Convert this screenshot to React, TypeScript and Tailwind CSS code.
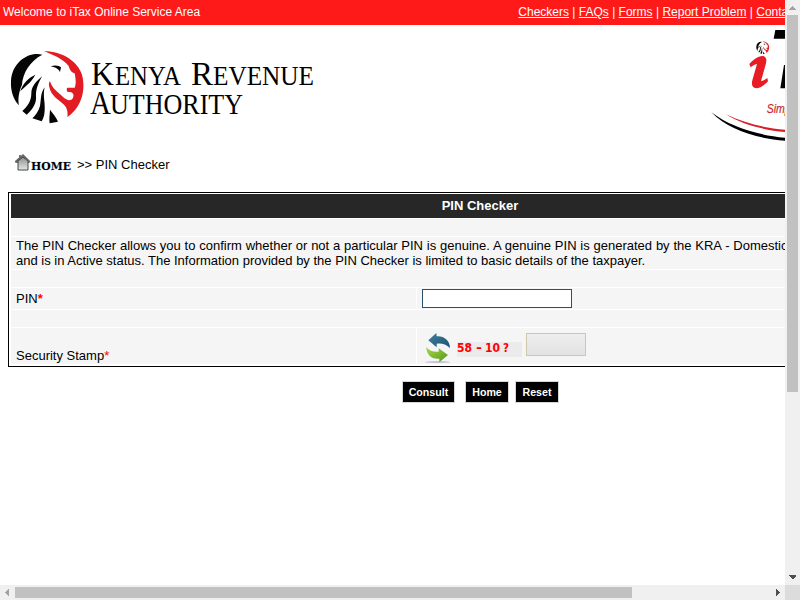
import React from "react";

function LionMark() {
  return (
    <g>
      <path fill="#050505" d="M127 44 C86 34 36 66 33 124 C31 154 42 182 57 196 C53 178 56 156 66 134 C68 100 90 62 127 44Z" />
      <path fill="#050505" d="M106 104 C88 112 68 130 61 154 C76 138 92 130 106 104Z" />
      <path fill="#050505" d="M126 109 C112 122 94 138 94 160 C94 184 82 200 67 213 L80 224 C100 206 110 188 108 168 C107 146 117 126 126 109Z" />
      <path fill="#050505" d="M134 142 C121 160 124 176 120 198 C116 214 106 226 97 235 L125 244 C136 228 135 202 133 184 C131 166 131 154 134 142Z" />
      <path fill="#050505" d="M150 209 C149 224 147 238 149 250 L174 245 C168 230 158 220 150 209Z" />
      <path fill="#050505" d="M152 79 C164 74 178 76 183 82 L180 96 C176 88 168 82 152 79Z" />
      <path fill="#e31b23" d="M132 34 C184 33 232 62 246 104 C260 158 238 208 202 231 C204 218 202 204 192 194 C178 180 154 170 148 142 C146 134 146 128 150 124 C156 146 174 156 190 172 C202 182 212 184 219 174 C222 166 221 160 214 157 L202 155 C199 149 200 146 202 143 L224 143 C230 130 226 112 224 100 C216 98 210 92 206 78 C188 56 158 44 132 34Z" />
    </g>
  );
}

function KraLogo() {
  return (
    <svg className="block h-[95px] w-[325px] shrink-0" viewBox="0 0 325 95">
      <g transform="scale(.33333)"><LionMark /></g>
      <g className="[font-family:'Liberation_Serif',serif] fill-black">
        <text x="91" y="45" fontSize="33.5" textLength="23" lengthAdjust="spacingAndGlyphs">K</text>
        <text x="115" y="45" fontSize="28" textLength="66" lengthAdjust="spacingAndGlyphs">ENYA</text>
        <text x="191" y="45" fontSize="33.5" textLength="22" lengthAdjust="spacingAndGlyphs">R</text>
        <text x="213" y="45" fontSize="28" textLength="101" lengthAdjust="spacingAndGlyphs">EVENUE</text>
        <text x="90" y="74" fontSize="33" textLength="21" lengthAdjust="spacingAndGlyphs">A</text>
        <text x="110" y="74" fontSize="29" textLength="133" lengthAdjust="spacingAndGlyphs">UTHORITY</text>
      </g>
    </svg>
  );
}

function ITaxLogo() {
  return (
    <svg className="block h-[120px] w-[85px] shrink-0" viewBox="0 0 255 360">
      <path d="M226 15H255V41H221Z M252 120H255V190H241Z" />
      <g transform="translate(163 43) scale(.178)"><LionMark /></g>
      <path fill="#e81c24" d="M148 117 C160 104 176 91 190 93 C202 97 200 108 196 122 L183 168 C190 168 195 164 202 159 L204 169 C194 180 182 189 169 190 C156 188 154 179 157 166 L171 117 C163 118 158 122 152 127Z" />
      <text x="200" y="263" fontSize="38" fontStyle="italic" fill="#c9252c" stroke="#c9252c" strokeWidth=".6" className="[font-family:'Liberation_Sans_Narrow','Liberation_Sans',sans-serif]" textLength="110" lengthAdjust="spacingAndGlyphs">Simplify</text>
      <path d="M34 262 C90 305 170 330 255 338 V347 C165 340 85 314 34 262Z" />
      <path fill="#d71f27" d="M78 268 C130 293 190 309 255 314 V321 C190 315 125 298 78 268Z" />
    </svg>
  );
}

function HomeIcon() {
  return (
    <svg className="mt-[9px] block h-[18px] w-[58px] shrink-0" viewBox="0 0 58 18">
      <defs>
        <linearGradient id="wall" x1="0" y1="0" x2="0" y2="1">
          <stop offset="0" stopColor="#8c8c8c" /><stop offset="1" stopColor="#e4e8ea" />
        </linearGradient>
      </defs>
      <path d="M4 1H6V3L8 1L15 8L14 9H1L0 8L4 4Z" fill="#777" />
      <path d="M3 7L8 3L13 7V16H3Z" fill="url(#wall)" stroke="#444" />
      <path d="M0 8L8 1L15 8" fill="none" stroke="#666" strokeWidth="1.5" />
      <text x="16" y="16" fontSize="11" fontWeight="700" textLength="40" lengthAdjust="spacingAndGlyphs" stroke="#d9ecfb" strokeWidth="1" paintOrder="stroke" className="[font-family:'DejaVu_Serif',serif]">HOME</text>
    </svg>
  );
}

function RefreshIcon() {
  return (
    <svg className="mt-[4px] block h-[31px] w-[28px] shrink-0" viewBox="0 0 84 93">
      <defs>
        <linearGradient id="up" x1="0" y1="0" x2="1" y2="1"><stop offset="0" stopColor="#417f9d" /><stop offset="1" stopColor="#1d5373" /></linearGradient>
        <linearGradient id="down" x1="0" y1="0" x2="1" y2="1"><stop offset="0" stopColor="#a8d843" /><stop offset="1" stopColor="#55961b" /></linearGradient>
      </defs>
      <ellipse cx="41" cy="90" rx="38" ry="2.5" fill="#b9b0cb" />
      <path fill="url(#up)" d="M13 25L37 3L38 13C60 11 78 26 78 48C66 36 52 33 38 35V46Z" />
      <path fill="url(#down)" d="M7 45C17 57 30 61 44 59V49L72 69L46 91V80C22 82 7 68 7 45Z" />
    </svg>
  );
}

function Required({ bold = false }: { bold?: boolean }) {
  return <span className={bold ? "font-bold text-[#f00]" : "text-[#f00]"}>*</span>;
}

function PinTable() {
  return (
    <section className="ml-2 flex h-[175px] w-[944px] shrink-0 flex-col gap-px border border-black px-[2px] pt-px">
      <h1 className="flex h-6 items-center justify-center bg-[#272727] text-[13px] font-bold text-white">PIN Checker</h1>
      <div className="h-[17px] bg-[#f5f5f5]" />
      <p className="h-8 bg-[#f5f5f5] pl-[5px] pt-px text-[13px] leading-[15px] whitespace-nowrap">
        <span className="[word-spacing:0.2px]">The PIN Checker allows you to confirm whether or not a particular PIN is genuine. A genuine PIN is generated by the KRA - Domestic Taxes Department</span><br />
        and is in Active status. The Information provided by the PIN Checker is limited to basic details of the taxpayer.
      </p>
      <div className="h-[17px] bg-[#f5f5f5]" />
      <div className="flex h-[21px] gap-px">
        <label className="w-[405px] bg-[#f5f5f5] pl-[5px] pt-[3px] leading-[15px]">PIN<Required bold /></label>
        <div className="flex-1 bg-[#f5f5f5] pl-[5px] pt-px">
          <input className="block h-[19px] w-[150px] border border-[#2b4f66] bg-white" />
        </div>
      </div>
      <div className="h-[17px] bg-[#f5f5f5]" />
      <div className="flex h-9 gap-px">
        <label className="w-[405px] bg-[#f5f5f5] pl-[5px] pt-5 leading-[15px]">Security Stamp<Required /></label>
        <div className="flex flex-1 bg-[#f5f5f5] pl-[7px]">
          <RefreshIcon />
          <svg className="ml-[5px] mt-[14px] block h-[15px] w-[65px] bg-[#ebebeb]" viewBox="0 0 65 15">
            <g fontSize="12" fontWeight="700" fill="#f00" className="[font-family:'DejaVu_Sans_Condensed','DejaVu_Sans',sans-serif]">
              <text x="0" y="10" textLength="15" lengthAdjust="spacingAndGlyphs">58</text>
              <text x="19" y="10" textLength="6" lengthAdjust="spacingAndGlyphs">-</text>
              <text x="28" y="10" textLength="15" lengthAdjust="spacingAndGlyphs">10</text>
              <text x="46" y="10" textLength="6" lengthAdjust="spacingAndGlyphs">?</text>
            </g>
          </svg>
          <input className="ml-1 mt-[5px] block h-[23px] w-[60px] border border-[#d0c6a8] bg-linear-to-b from-[#eeeeee] to-[#e2e2e2]" />
        </div>
      </div>
    </section>
  );
}

const button = "h-[22px] border border-[#d6d6d6] bg-black text-[10.67px] leading-5 font-bold text-white";

export default function App() {
  return (
    <div className="grid h-[600px] w-[800px] grid-cols-[785px_15px] grid-rows-[585px_15px] overflow-hidden bg-white text-[13px] text-black [font-family:'Liberation_Sans',Arial,sans-serif]">
      <main className="flex min-w-0 flex-col overflow-hidden">
        <header className="flex h-[25px] shrink-0 bg-[#ff1a1a] pl-[3px] pt-1 text-[12px] leading-4 whitespace-nowrap text-white">
          <span className="w-[515.3px] shrink-0">Welcome to iTax Online Service Area</span>
          <nav><a className="underline">Checkers</a> | <a className="underline">FAQs</a> | <a className="underline">Forms</a> | <a className="underline">Report Problem</a> | <a className="underline">Contact Us</a></nav>
        </header>
        <div className="flex h-[120px] shrink-0 justify-between">
          <div className="pt-[15px]"><KraLogo /></div>
          <ITaxLogo />
        </div>
        <div className="flex h-[47px] shrink-0 pl-[15px]">
          <HomeIcon />
          <span className="ml-1 mt-3 leading-[15px]">&gt;&gt; PIN Checker</span>
        </div>
        <PinTable />
        <div className="mt-[14px] flex pl-[402px]">
          <button className={`w-[53px] ${button}`}>Consult</button>
          <button className={`ml-[10px] w-11 ${button}`}>Home</button>
          <button className={`ml-[6px] w-11 ${button}`}>Reset</button>
        </div>
      </main>
      <div className="flex flex-col items-center bg-[#f0f0f0]">
        <svg className="block h-[15px] w-[15px] shrink-0" shapeRendering="crispEdges"><path fill="#a3a3a3" d="M4 10L7.5 6L11 10Z" /></svg>
        <div className="h-[377px] w-[11px] shrink-0 bg-[#c1c1c1]" />
        <svg className="mt-auto block h-[15px] w-[15px]" shapeRendering="crispEdges"><path fill="#505050" d="M4 5H11V6L7.5 9.5L4 6Z" /></svg>
      </div>
      <div className="flex items-center bg-[#f0f0f0]">
        <svg className="block h-[15px] w-[15px] shrink-0" shapeRendering="crispEdges"><path fill="#a3a3a3" d="M9 4L5 7.5L9 11Z" /></svg>
        <div className="h-[11px] w-[617px] bg-[#c1c1c1]" />
        <svg className="ml-auto block h-[15px] w-[15px]" shapeRendering="crispEdges"><path fill="#505050" d="M6 4L10 7.5L6 11Z" /></svg>
      </div>
      <div className="bg-[#dcdcdc]" />
    </div>
  );
}
